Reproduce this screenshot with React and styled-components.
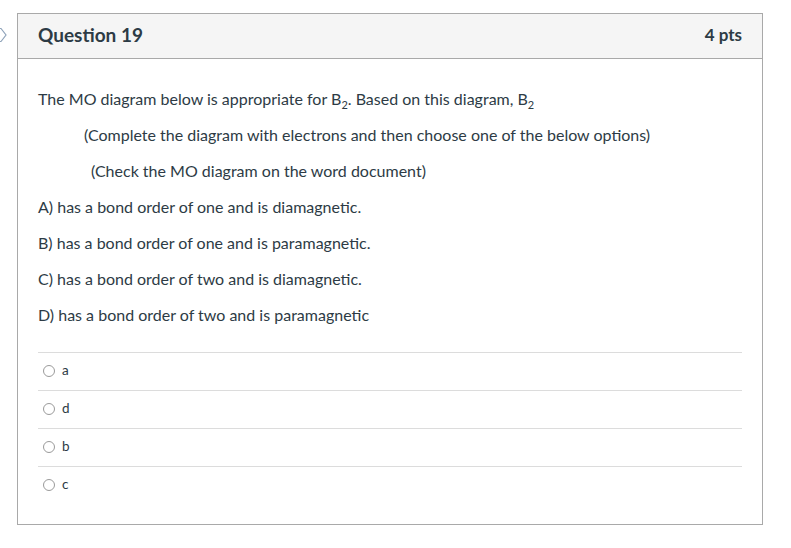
import React from "react";
import styled, { createGlobalStyle } from "styled-components";

const GlobalStyle = createGlobalStyle`
  body {
    margin: 0;
    background: #fff;
    font-family: Lato, "Noto Sans", sans-serif;
    color: #2d3b45;
  }
`;

const Page = styled.div`
  padding: 13px 0 0 17px;
`;

const Card = styled.div`
  position: relative;
  width: 744px;
  border: 1px solid #a9a9a9;
  background: #fff;
`;

const Flag = styled.svg`
  position: absolute;
  left: -36px;
  top: 13px;
`;

const Header = styled.div`
  display: flex;
  align-items: center;
  justify-content: space-between;
  height: 41px;
  padding: 0 20px 3px;
  background: #f5f5f5;
  border-bottom: 1px solid #a9a9a9;
`;

const Title = styled.h2`
  margin: 0;
  font-size: 19px;
  font-weight: 700;
  color: #2d3b45;
`;

const Points = styled.div`
  font-size: 17px;
  font-weight: 700;
  color: #2d3b45;
`;

const Body = styled.div`
  padding: 14px 20px 20px;
`;

const Para = styled.p`
  margin: 15px 0;
  font-size: 16px;
  line-height: 21px;
  padding-left: ${(p) => p.indent || 0}px;
`;

const Sub = styled.sub`
  font-size: 11px;
  line-height: 0;
`;

const Answers = styled.div`
  margin-top: 27px;
`;

const AnswerRow = styled.label`
  display: flex;
  align-items: center;
  gap: 7px;
  box-sizing: border-box;
  height: 38px;
  padding: 0 0 3px 5px;
  border-top: 1px solid #dcdcdc;
  font-size: 13.5px;
`;

const Radio = styled.span`
  width: 12px;
  height: 12px;
  margin-top: 2px;
  box-sizing: border-box;
  border: 1px solid #9a9a9a;
  border-radius: 50%;
  background: #fff;
`;

const answers = ["a", "d", "b", "c"];

export default function App() {
  return (
    <Page>
      <GlobalStyle />
      <Card>
        <Flag width="26" height="16" viewBox="0 0 26 16">
          <path
            d="M0.5 1.5 H19 L24 8 L19 14.5 H0.5"
            fill="none"
            stroke="#8fa3ba"
            strokeWidth="1.2"
          />
        </Flag>
        <Header>
          <Title>Question 19</Title>
          <Points>4 pts</Points>
        </Header>
        <Body>
          <Para>
            The MO diagram below is appropriate for B<Sub>2</Sub>. Based on this diagram, B
            <Sub>2</Sub>
          </Para>
          <Para indent={46}>
            (Complete the diagram with electrons and then choose one of the below options)
          </Para>
          <Para indent={53}>(Check the MO diagram on the word document)</Para>
          <Para>A) has a bond order of one and is diamagnetic.</Para>
          <Para>B) has a bond order of one and is paramagnetic.</Para>
          <Para>C) has a bond order of two and is diamagnetic.</Para>
          <Para>D) has a bond order of two and is paramagnetic</Para>
          <Answers>
            {answers.map((a) => (
              <AnswerRow key={a}>
                <Radio />
                {a}
              </AnswerRow>
            ))}
          </Answers>
        </Body>
      </Card>
    </Page>
  );
}
